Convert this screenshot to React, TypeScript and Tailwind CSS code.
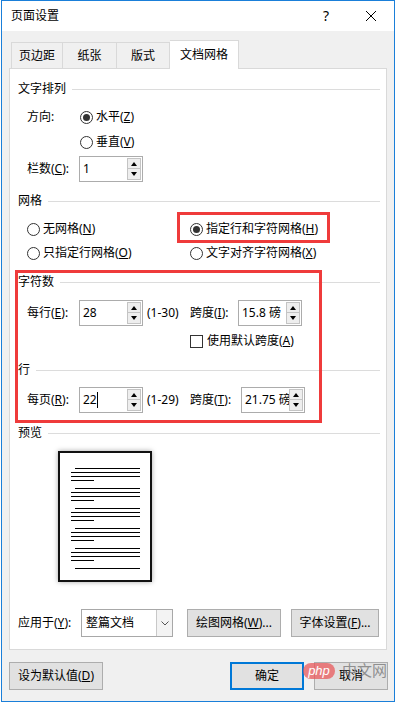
import React from "react";

function Radio({ checked }: { checked?: boolean }) {
  return (
    <span className="w-[13px] h-[13px] rounded-full border border-[#333333] bg-white flex items-center justify-center shrink-0">
      {checked && <span className="w-[7px] h-[7px] rounded-full bg-[#333333]" />}
    </span>
  );
}

function Header({ label }: { label: string }) {
  return (
    <div className="flex items-center h-[20px] pl-[8px] pr-[6px]">
      <span>{label}</span>
      <div className="flex-1 h-px bg-[#dcdcdc] ml-[6px]" />
    </div>
  );
}

function Spin({ value, cursor }: { value: string; cursor?: boolean }) {
  return (
    <div className="flex w-[64px] h-[26px] border border-[#acacac] bg-white shrink-0">
      <div className="flex-1 overflow-hidden whitespace-nowrap pl-[3px] flex items-center">
        <span>{value}</span>
        {cursor && <span className="w-px h-[16px] bg-black shrink-0" />}
      </div>
      <div className="flex flex-col py-[1px] pr-[1px] shrink-0">
        <div className="w-[14px] h-[11px] border border-[#c4c4c4] bg-[#eeeeee] flex items-center justify-center">
          <span className="w-0 h-0 border-l-[3px] border-r-[3px] border-b-[4px] border-l-transparent border-r-transparent border-b-black" />
        </div>
        <div className="w-[14px] h-[11px] border border-t-0 border-[#c4c4c4] bg-[#eeeeee] flex items-center justify-center">
          <span className="w-0 h-0 border-l-[3px] border-r-[3px] border-t-[4px] border-l-transparent border-r-transparent border-t-black" />
        </div>
      </div>
    </div>
  );
}

function Preview() {
  const rows: React.ReactNode[] = [];
  for (let k = 0; k < 5; k++) {
    const y = 15 + k * 20;
    rows.push(<rect key={`a${k}`} x={15} y={y} width={65} height={1} fill="#000" />);
    rows.push(<rect key={`b${k}`} x={11} y={y + 4} width={69} height={1} fill="#000" />);
    rows.push(<rect key={`c${k}`} x={11} y={y + 8} width={69} height={1} fill="#000" />);
    rows.push(<rect key={`d${k}`} x={11} y={y + 12} width={23} height={1} fill="#000" />);
  }
  rows.push(<rect key="last" x={15} y={115} width={65} height={1} fill="#000" />);
  return (
    <div className="ml-[48px] mt-[8px] w-[94px] h-[131px] border-2 border-[#111111] bg-white shadow-[0_0_5px_rgba(0,0,0,0.35)]">
      <svg width="90" height="127" viewBox="0 0 90 127">
        {rows}
      </svg>
    </div>
  );
}

function Btn({ children, w, primary }: { children: React.ReactNode; w: string; primary?: boolean }) {
  return (
    <div
      className={
        primary
          ? `${w} h-[28px] border-2 border-[#0078d7] bg-[#e1e1e1] flex items-center justify-center shrink-0`
          : `${w} h-[28px] border border-[#adadad] bg-[#e1e1e1] flex items-center justify-center shrink-0`
      }
    >
      {children}
    </div>
  );
}

export default function App() {
  return (
    <div className="relative w-[397px] h-[704px] bg-white text-[12px] text-black font-['Noto_Sans','Noto_Sans_CJK_SC',sans-serif] leading-none">
      <div className="ml-[1px] w-[394px] h-[702px] border border-[#1a7fd9] bg-[#f0f0f0] flex flex-col">
        {/* title bar */}
        <div className="h-[30px] bg-white flex items-center shrink-0">
          <span className="pl-[9px]">页面设置</span>
          <span className="ml-auto w-[46px] text-center text-[14px]">?</span>
          <span className="w-[44px] flex items-center justify-center mr-[1px]">
            <svg width="12" height="12" viewBox="0 0 12 12">
              <path d="M1 1 L11 11 M11 1 L1 11" stroke="#000" strokeWidth="1" />
            </svg>
          </span>
        </div>

        {/* tabs */}
        <div className="flex items-end h-[28px] ml-[9px] mt-[9px] shrink-0">
          <div className="w-[52px] h-[26px] border border-b-0 border-[#d9d9d9] flex items-center justify-center">页边距</div>
          <div className="w-[54px] h-[26px] border border-l-0 border-b-0 border-[#d9d9d9] flex items-center justify-center">纸张</div>
          <div className="w-[53px] h-[26px] border border-l-0 border-b-0 border-[#d9d9d9] flex items-center justify-center">版式</div>
          <div className="relative z-10 w-[69px] h-[29px] -mb-px bg-white border border-l-0 border-b-0 border-[#d9d9d9] flex items-center justify-center pb-[1px]">文档网格</div>
        </div>

        {/* panel */}
        <div className="ml-[7px] w-[378px] h-[582px] border border-[#d9d9d9] bg-white flex flex-col shrink-0">
          <div className="mt-[10px]"><Header label="文字排列" /></div>
          <div className="mt-[6px] h-[24px] flex items-center pl-[17px]">
            <span className="w-[53px]">方向:</span>
            <Radio checked />
            <span className="ml-[3px]">水平(<u>Z</u>)</span>
          </div>
          <div className="mt-[1px] h-[24px] flex items-center pl-[70px]">
            <Radio />
            <span className="ml-[3px]">垂直(<u>V</u>)</span>
          </div>
          <div className="mt-[2px] h-[26px] flex items-center pl-[17px]">
            <span className="w-[52px]">栏数(<u>C</u>):</span>
            <Spin value="1" />
          </div>

          <div className="mt-[9px]"><Header label="网格" /></div>
          <div className="mt-[6px] h-[24px] flex items-center pl-[17px]">
            <div className="w-[163px] flex items-center">
              <Radio />
              <span className="ml-[3px]">无网格(<u>N</u>)</span>
            </div>
            <Radio checked />
            <span className="ml-[3px]">指定行和字符网格(<u>H</u>)</span>
          </div>
          <div className="h-[24px] flex items-center pl-[17px]">
            <div className="w-[163px] flex items-center">
              <Radio />
              <span className="ml-[3px]">只指定行网格(<u>O</u>)</span>
            </div>
            <Radio />
            <span className="ml-[3px]">文字对齐字符网格(<u>X</u>)</span>
          </div>

          <div className="mt-[7px]"><Header label="字符数" /></div>
          <div className="mt-[8px] h-[26px] flex items-center pl-[17px]">
            <span className="w-[52px]">每行(<u>E</u>):</span>
            <Spin value="28" />
            <span className="w-[47px] pl-[4px]">(1-30)</span>
            <span className="w-[48px]">跨度(<u>I</u>):</span>
            <Spin value="15.8 磅" />
          </div>
          <div className="mt-[5px] h-[20px] flex items-center pl-[180px]">
            <span className="w-[13px] h-[13px] border border-[#333333] bg-white shrink-0" />
            <span className="ml-[4px]">使用默认跨度(<u>A</u>)</span>
          </div>

          <div className="mt-[9px]"><Header label="行" /></div>
          <div className="mt-[7px] h-[26px] flex items-center pl-[17px]">
            <span className="w-[52px]">每页(<u>R</u>):</span>
            <Spin value="22" cursor />
            <span className="w-[47px] pl-[4px]">(1-29)</span>
            <span className="w-[51px]">跨度(<u>T</u>):</span>
            <Spin value="21.75 磅" />
          </div>

          <div className="mt-[10px]"><Header label="预览" /></div>
          <Preview />

          <div className="mt-[26px] h-[29px] flex items-center pl-[8px]">
            <span className="w-[63px]">应用于(<u>Y</u>):</span>
            <div className="w-[92px] h-[28px] mt-[1px] border border-[#a8a8a8] bg-white flex shrink-0">
              <span className="flex-1 flex items-center pl-[4px]">整篇文档</span>
              <span className="w-[16px] border-l border-[#c8c8c8] bg-[#f3f3f3] flex items-center justify-center">
                <svg width="8" height="5" viewBox="0 0 8 5">
                  <path d="M0.5 0.5 L4 4 L7.5 0.5" stroke="#555" strokeWidth="1" fill="none" />
                </svg>
              </span>
            </div>
            <div className="ml-[14px]">
              <Btn w="w-[94px]">绘图网格(<u>W</u>)...</Btn>
            </div>
            <div className="ml-[10px]">
              <Btn w="w-[88px]">字体设置(<u>F</u>)...</Btn>
            </div>
          </div>
        </div>

        {/* bottom buttons */}
        <div className="mt-[12px] flex items-center pl-[7px] pr-[6px]">
          <Btn w="w-[94px]">设为默认值(<u>D</u>)</Btn>
          <div className="flex-1" />
          <Btn w="w-[74px]" primary>确定</Btn>
          <div className="ml-[10px]">
            <Btn w="w-[74px]">取消</Btn>
          </div>
        </div>
      </div>

      {/* red annotation boxes */}
      <div className="absolute left-[177px] top-[212px] w-[153px] h-[31px] border-[3px] border-[#ef3b3b]" />
      <div className="absolute left-[15px] top-[270px] w-[307px] h-[153px] border-[3px] border-[#ef3b3b]" />

      {/* watermark */}
      <div className="absolute left-[303px] top-[663px] w-[32px] h-[16px] rounded-full bg-[#e8585b]/75 flex items-center justify-center">
        <span className="text-white italic text-[13px] font-['Liberation_Sans',sans-serif] -mt-[2px]">php</span>
      </div>
      <div className="absolute left-[342px] top-[663px] text-[15px] text-[#6a6a6a]/70">中文网</div>
    </div>
  );
}
